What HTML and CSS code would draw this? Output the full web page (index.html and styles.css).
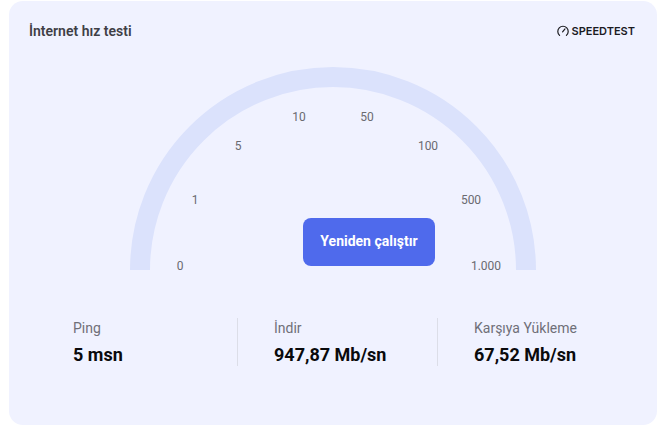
FILE: index.html
```html
<!DOCTYPE html>
<html lang="tr">
<head>
    <meta charset="UTF-8">
    <meta name="viewport" content="width=device-width, initial-scale=1.0">
    <title>İnternet hız testi</title>
    <link rel="stylesheet" href="styles.css">
</head>
<body>

    <div class="card">
        <div class="card-head">
            <h2 class="title">İnternet hız testi</h2>
            <div class="brand">
                <svg class="brand-icon" viewBox="0 0 12 12" width="12" height="12" fill="none" stroke="#1b1b1f" stroke-width="1.2" stroke-linecap="round">
                    <path d="M2.6 10.4A5.2 5.2 0 1 1 9.4 10.4"/>
                    <path d="M5.6 6.8L8 3.9"/>
                </svg>
                <span>SPEEDTEST</span>
            </div>
        </div>

        <div class="gauge">
            <svg class="gauge-arc" viewBox="0 0 406 203" width="406" height="203">
                <path d="M10 203A193 193 0 0 1 396 203" fill="none" stroke="#dbe2fc" stroke-width="20"/>
            </svg>
            <span class="tick tick-0">0</span>
            <span class="tick tick-1">1</span>
            <span class="tick tick-5">5</span>
            <span class="tick tick-10">10</span>
            <span class="tick tick-50">50</span>
            <span class="tick tick-100">100</span>
            <span class="tick tick-500">500</span>
            <span class="tick tick-1000">1.000</span>
            <button class="btn">Yeniden çalıştır</button>
        </div>

        <div class="stats">
            <div class="stat">
                <div class="stat-label">Ping</div>
                <div class="stat-value">5 msn</div>
            </div>
            <div class="stat">
                <div class="stat-label">İndir</div>
                <div class="stat-value">947,87 Mb/sn</div>
            </div>
            <div class="stat">
                <div class="stat-label">Karşıya Yükleme</div>
                <div class="stat-value">67,52 Mb/sn</div>
            </div>
        </div>
    </div>

</body>
</html>
```

FILE: styles.css
```css
body {
    font-family: Roboto, Arial, sans-serif;
    margin: 1px 7px 12px 9px;
    background-color: #fff;
}
.card {
    height: 424px;
    box-sizing: border-box;
    padding: 21px 22px 0 20px;
    background: #f0f2ff;
    border-radius: 14px;
}
.card-head {
    display: flex;
    justify-content: space-between;
    align-items: center;
    height: 18px;
}
.title {
    margin: 0;
    font-size: 14px;
    font-weight: 600;
    color: #3f3f46;
}
.brand {
    display: flex;
    align-items: center;
    gap: 2px;
    font-family: Inter, Arial, sans-serif;
    font-size: 11px;
    font-weight: 600;
    color: #1b1b1f;
}
.gauge {
    position: relative;
    width: 406px;
    height: 203px;
    margin: 27px auto 0;
    left: 1px;
}
.gauge-arc {
    display: block;
}
.tick {
    position: absolute;
    transform: translate(-50%, -50%);
    font-size: 12px;
    color: #6a6a70;
}
.tick-0 { left: 50px; top: 199px; }
.tick-1 { left: 65px; top: 133px; }
.tick-5 { left: 108px; top: 79px; }
.tick-10 { left: 169px; top: 50px; }
.tick-50 { left: 237px; top: 50px; }
.tick-100 { left: 298px; top: 79px; }
.tick-500 { left: 341px; top: 133px; }
.tick-1000 { left: 356px; top: 199px; }
.btn {
    position: absolute;
    left: 173px;
    top: 151px;
    width: 132px;
    height: 48px;
    padding: 0 0 2px;
    border: none;
    border-radius: 8px;
    background-color: #4f6aec;
    color: #fff;
    font-family: Roboto, Arial, sans-serif;
    font-size: 14px;
    font-weight: 700;
}
.stats {
    display: grid;
    grid-template-columns: repeat(3, 200px);
    margin: 48px 0 0 8px;
}
.stat {
    height: 48px;
    padding-left: 36px;
    border-left: 1px solid #dcdee8;
}
.stat:first-child {
    border-left: none;
    padding-left: 36px;
}
.stat-label {
    font-size: 14px;
    line-height: 20px;
    color: #6f6f78;
}
.stat-value {
    margin-top: 6px;
    font-size: 18px;
    line-height: 22px;
    font-weight: 700;
    color: #0a0a0c;
}
```
